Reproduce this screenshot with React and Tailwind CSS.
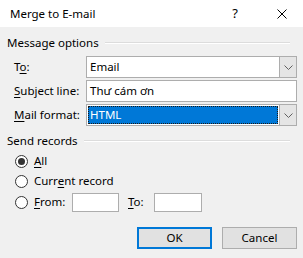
import React from 'react';

const Chevron = () => (
  <svg width="9" height="5" viewBox="0 0 9 5" className="block">
    <polyline points="0.5,0.5 4.5,4.5 8.5,0.5" fill="none" stroke="#606060" strokeWidth="1" />
  </svg>
);

const U = ({ children }) => <span className="underline underline-offset-2">{children}</span>;

const Radio = ({ checked }) => (
  <span className="w-[13px] h-[13px] rounded-full border border-[#333] bg-white flex items-center justify-center shrink-0">
    {checked && <span className="w-[7px] h-[7px] rounded-full bg-[#333]" />}
  </span>
);

const GroupTitle = ({ children }) => (
  <div className="flex items-center gap-[6px] pr-[13px] h-[12px]">
    <span>{children}</span>
    <span className="flex-1 border-t border-[#dcdcdc] border-b border-b-white" />
  </div>
);

export default function App() {
  return (
    <div
      className="w-[303px] h-[258px] bg-[#f0f0f0] text-[11.5px] leading-none text-black overflow-hidden"
      style={{ fontFamily: '"Segoe UI", "Noto Sans", sans-serif' }}
    >
      {/* title bar */}
      <div className="h-[27px] bg-white flex items-center pl-[10px] pr-[16px]">
        <span className="flex-1">Merge to E-mail</span>
        <span className="mr-[39px] text-[13px]">?</span>
        <svg width="10" height="10" viewBox="0 0 10 10">
          <path d="M0.5 0.5L9.5 9.5M9.5 0.5L0.5 9.5" stroke="#000" strokeWidth="1" />
        </svg>
      </div>

      <div className="pl-[7px] pt-[10px]">
        <GroupTitle>Message options</GroupTitle>

        <div className="pl-[7px] pr-[6px] mt-[7px] flex flex-col gap-[2px]">
          <div className="flex items-center">
            <span className="w-[72px]">T<U>o</U>:</span>
            <div className="flex-1 h-[22px] border border-[#adadad] bg-white flex">
              <span className="flex-1 flex items-center pl-[3px]">Email</span>
              <span className="w-[17px] bg-[#e5e5e5] border-l border-[#adadad] flex items-center justify-center">
                <Chevron />
              </span>
            </div>
          </div>
          <div className="flex items-center">
            <span className="w-[72px]"><U>S</U>ubject line:</span>
            <div className="flex-1 h-[22px] border border-[#adadad] bg-white flex items-center pl-[3px]">
              Thư cám ơn
            </div>
          </div>
          <div className="flex items-center">
            <span className="w-[72px]"><U>M</U>ail format:</span>
            <div className="flex-1 h-[22px] border border-[#adadad] bg-white flex">
              <div className="flex-1 p-[1px]">
                <div className="h-full bg-[#0078d7] text-white border border-dotted border-[#1a1a1a] flex items-center pl-[1px]">
                  HTML
                </div>
              </div>
              <span className="w-[17px] bg-[#e5e5e5] border-l border-[#adadad] flex items-center justify-center">
                <Chevron />
              </span>
            </div>
          </div>
        </div>

        <div className="mt-[9px]">
          <GroupTitle>Send records</GroupTitle>
        </div>

        <div className="pl-[8px] mt-[4px] flex flex-col">
          <div className="flex items-center gap-[6px] h-[20px]">
            <Radio checked />
            <span><U>A</U>ll</span>
          </div>
          <div className="flex items-center gap-[6px] h-[20px]">
            <Radio />
            <span>Curr<U>e</U>nt record</span>
          </div>
          <div className="flex items-center gap-[6px] h-[20px] mt-[1px]">
            <Radio />
            <span className="w-[32px]"><U>F</U>rom:</span>
            <span className="w-[47px] h-[19px] border border-[#adadad] bg-white" />
            <span className="ml-[3px] w-[20px]"><U>T</U>o:</span>
            <span className="w-[48px] h-[19px] border border-[#adadad] bg-white" />
          </div>
        </div>

        <div className="flex justify-end gap-[10px] pr-[6px] mt-[15px]">
          <button className="w-[75px] h-[22px] bg-[#e1e1e1] border-2 border-[#0078d7] flex items-center justify-center">
            OK
          </button>
          <button className="w-[75px] h-[22px] bg-[#e1e1e1] border border-[#adadad] flex items-center justify-center">
            Cancel
          </button>
        </div>
      </div>
    </div>
  );
}
